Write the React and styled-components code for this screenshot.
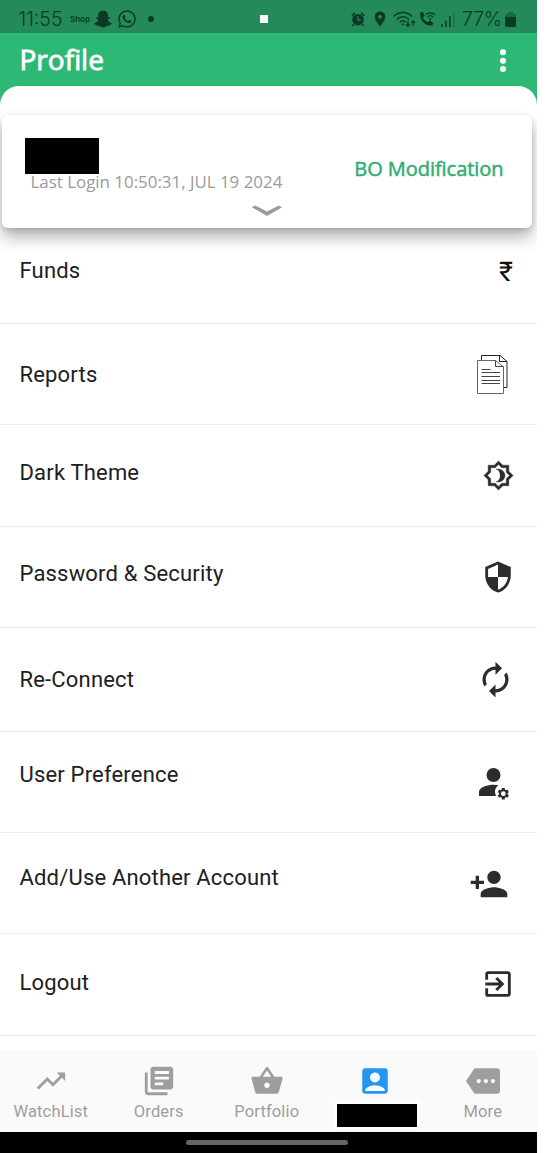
import React from "react";
import styled, { createGlobalStyle } from "styled-components";
import { FaSnapchatGhost, FaWhatsapp } from "react-icons/fa";
import {
  MdAccountBox,
  MdAutorenew,
  MdExitToApp,
  MdLibraryBooks,
  MdLocationOn,
  MdMore,
  MdPersonAdd,
  MdSecurity,
  MdShoppingBasket,
  MdTrendingUp,
} from "react-icons/md";

const GlobalStyle = createGlobalStyle`
  * {
    box-sizing: border-box;
  }
  body {
    margin: 0;
    background: #fff;
    overflow: hidden;
  }
  svg {
    display: block;
    flex: none;
  }
`;

const Screen = styled.div`
  width: 537px;
  height: 1153px;
  display: flex;
  flex-direction: column;
  overflow: hidden;
  background: #fff;
  font-family: Roboto, sans-serif;
`;

const StatusBar = styled.div`
  height: 33px;
  flex: none;
  display: flex;
  align-items: center;
  padding: 5px 0 0 18px;
  background: #248a59;
  color: #0b3a24;
`;

const StatusItem = styled.div`
  width: ${(p) => p.$width}px;
  margin-left: ${(p) => p.$gap || 0}px;
  flex: none;
  display: flex;
  justify-content: center;
`;

const StatusText = styled(StatusItem)`
  font-family: Inter, sans-serif;
  font-size: ${(p) => p.$size}px;
  font-weight: ${(p) => p.$weight || 300};
  letter-spacing: ${(p) => p.$spacing || 0}px;
  line-height: 24px;
  white-space: nowrap;
`;

const Dot = styled.div`
  width: 6px;
  height: 6px;
  border-radius: 50%;
  background: #0b3a24;
`;

const CameraMark = styled.div`
  width: 8px;
  height: 8px;
  background: #fff;
`;

const Header = styled.div`
  background: #2db875;
  flex: none;
`;

const TitleBar = styled.div`
  height: 53px;
  display: flex;
  justify-content: space-between;
  align-items: center;
  padding: 0 30px 0 19.5px;
`;

const Title = styled.h1`
  margin: 0 0 2px;
  color: #fff;
  font-family: "Open Sans", sans-serif;
  font-size: 28px;
  font-weight: 400;
  line-height: 38px;
  -webkit-text-stroke: 0.8px #fff;
`;

const SheetTop = styled.div`
  height: 29px;
  background: #fff;
  border-radius: 19px 19px 0 0;
`;

const Card = styled.div`
  height: 113px;
  flex: none;
  margin: 0 5px 0 2px;
  padding: 23px 28.5px 0 23px;
  display: grid;
  grid-template-columns: 1fr auto;
  grid-template-rows: 54px 36px;
  background: #fff;
  border-radius: 6px;
  box-shadow: 0 10px 16px rgba(0, 0, 0, 0.28), 0 2px 6px rgba(0, 0, 0, 0.14);
  font-family: "Open Sans", sans-serif;
  z-index: 1;
`;

const UserName = styled.div`
  width: 74px;
  height: 36px;
  background: #000;
`;

const LastLogin = styled.div`
  margin: -4px 0 0 5.5px;
  color: #9b9b9b;
  font-size: 16.9px;
  line-height: 24px;
  white-space: nowrap;
`;

const Modification = styled.a`
  margin-top: 17px;
  color: #2fae72;
  font-size: 20px;
  line-height: 28px;
  letter-spacing: -0.05px;
  -webkit-text-stroke: 0.5px #2fae72;
`;

const Expand = styled.div`
  grid-column: 1 / 3;
  margin: 12px 0 0 226px;
`;

const Menu = styled.div`
  height: 822px;
  flex: none;
`;

const MenuRow = styled.div`
  height: ${(p) => p.$height}px;
  display: flex;
  justify-content: space-between;
  border-bottom: 1px solid #ececec;
  color: #202022;
`;

const MenuLabel = styled.span`
  margin: ${(p) => p.$top}px 0 0 19.5px;
  font-size: 22px;
  line-height: 26px;
  letter-spacing: 0.18px;
`;

const MenuIcon = styled.span`
  margin: ${(p) => p.$top}px ${(p) => p.$right}px 0 0;
  color: #2c2c2e;
`;

const Rupee = styled.span`
  display: block;
  color: #111;
  font-size: 27px;
  line-height: 30px;
`;

const BottomNav = styled.div`
  height: 82px;
  flex: none;
  display: grid;
  grid-template-columns: repeat(5, 108px);
  padding-top: 14px;
  background: #fafafa;
  overflow: hidden;
`;

const NavItem = styled.div`
  display: flex;
  flex-direction: column;
  align-items: center;
  margin-left: -6.5px;
  color: ${(p) => (p.$active ? "#2196f3" : "#9e9e9e")};
`;

const NavLabel = styled.span`
  margin-top: 4px;
  font-size: 16.5px;
  line-height: 20px;
  letter-spacing: 0.15px;
`;

const HiddenLabel = styled.div`
  width: 80px;
  height: 23px;
  margin: 6px 0 0 3.5px;
  flex: none;
  background: #000;
  box-shadow: 0 0 0 3px #fff;
`;

const GestureBar = styled.div`
  height: 21px;
  flex: none;
  padding: 8px 0 0 186px;
  background: #000;
`;

const Handle = styled.div`
  width: 162px;
  height: 5px;
  border-radius: 3px;
  background: #666;
`;

const AlarmIcon = () => (
  <svg width="14" height="15" viewBox="0 0 14 15" fill="none">
    <circle cx="7" cy="7.7" r="5.8" fill="currentColor" />
    <path d="M.8 3.6 4 .9M13.2 3.6 10 .9M2.7 12.3 1.3 14M11.3 12.3l1.4 1.7" stroke="currentColor" strokeWidth="1.6" />
    <path d="M7 4.5v3.7h3" stroke="#248a59" strokeWidth="1.2" />
  </svg>
);

const WifiIcon = () => (
  <svg width="23" height="17" viewBox="0 0 23 17" fill="none" stroke="currentColor" strokeWidth="1.5">
    <path d="M.8 5.5c5-5.2 13-5.2 18 0M3.7 8.4c3.4-3.5 8.8-3.5 12.2 0M6.7 11.2c1.8-1.8 4.4-1.8 6.2 0" />
    <circle cx="9.8" cy="13.4" r="1.1" fill="currentColor" stroke="none" />
    <path d="M15 9.8v5.4m-2-1.9 2 2 2-2M20.3 15.3V9.9m-2 2 2-2 2 2" strokeWidth="1.3" />
  </svg>
);

const CallIcon = () => (
  <svg width="17" height="16" viewBox="0 0 17 16" fill="none">
    <path d="M1.2 1.4 3.7.8 5.6 4.6 4 6.4c1 2.2 2.6 3.8 4.8 4.8l1.8-1.6 3.6 1.9-.6 2.7C8.2 16 .2 10.2 1.2 1.4z" fill="currentColor" />
    <path d="M6.7 3.8c2.7-2.6 6.7-2.6 9.4 0M8.6 6c1.6-1.6 4-1.6 5.6 0" stroke="currentColor" strokeWidth="1.3" />
    <circle cx="11.4" cy="7.9" r="1" fill="currentColor" />
  </svg>
);

const SignalIcon = () => (
  <svg width="14" height="15" viewBox="0 0 14 15" fill="currentColor">
    <path d="M0 12h1.6v3H0zM4 8.5h1.6V15H4zM8 4h1.6v11H8z" />
    <path d="M12 1h1.6v14H12z" opacity=".3" />
  </svg>
);

const BatteryIcon = () => (
  <svg width="11" height="15" viewBox="0 0 11 15" fill="currentColor">
    <path d="M3 0h5v2h3v4H0V2h3z" opacity=".4" />
    <path d="M0 5h11v8.5a1.5 1.5 0 0 1-1.5 1.5h-8A1.5 1.5 0 0 1 0 13.5z" />
  </svg>
);

const MoreDots = () => (
  <svg width="8" height="24" viewBox="0 0 8 24" fill="#fff">
    <circle cx="4" cy="4.2" r="3" />
    <circle cx="4" cy="12.8" r="3" />
    <circle cx="4" cy="21" r="3" />
  </svg>
);

const ChevronIcon = () => (
  <svg width="32" height="13" viewBox="0 0 32 13" fill="#9b9b9b">
    <path d="M.8 3.200 4.200 1.500 16 7.400 27.800 1.500 31.200 3.200 16 12z" />
  </svg>
);

const ReportsIcon = () => (
  <svg width="32" height="40" viewBox="0 0 32 40" fill="none">
    <path d="M4.5 5.5v-5H23l7 6v26H27M22.5.5v6h7.500" stroke="#222" />
    <path d="M.5 5.5h18l8 6.500v26.500H.5z" fill="#fff" stroke="#666" />
    <path d="M18.500 5.500v6h8" stroke="#444" />
    <path d="M4.500 14.500h9M4.500 17.500H23M4.500 21.500H23M4.500 25.500H23M4.500 28.500H23" stroke="#444" />
  </svg>
);

const ThemeIcon = () => (
  <svg width="31" height="31" viewBox="0 0 24 24" fill="currentColor" stroke="currentColor" strokeWidth=".3">
    <path d="M20 8.690V4h-4.690L12 .69 8.690 4H4v4.690L.69 12 4 15.310V20h4.690L12 23.310 15.310 20H20v-4.690L23.310 12 20 8.690zm-2 5.790V18h-3.520L12 20.480 9.520 18H6v-3.520L3.520 12 6 9.520V6h3.520L12 3.520 14.480 6H18v3.520L20.480 12 18 14.480z" />
    <path d="M10.200 7c2.300.8 3.100 2.800 3.100 5s-.8 4.200-3.100 5c4 .6 6.800-1.900 6.800-5s-2.800-5.600-6.800-5z" />
  </svg>
);

const UserGearIcon = () => (
  <svg width="32" height="34" viewBox="0 0 32 34" fill="currentColor">
    <circle cx="15.500" cy="8" r="7" />
    <path d="M1 29v-4c0-5.200 9-7.300 14.500-7.300 1.600 0 3.300.2 5 .5-3.400 2.200-4.600 6.600-2.200 10.800z" />
    <circle cx="25.300" cy="26.700" r="3.400" fill="none" stroke="currentColor" strokeWidth="2" />
    <path
      d="M25.300 23.300v-2.300M25.300 30.100v2.300M22.400 25l-2-1.150M28.200 28.400l2 1.150M22.400 28.400l-2 1.150M28.200 25l2-1.150"
      stroke="currentColor"
      strokeWidth="3"
    />
  </svg>
);

const menuItems = [
  { label: "Funds", height: 96, top: 30, icon: <Rupee>₹</Rupee>, iconTop: 29, right: 24 },
  { label: "Reports", height: 101, top: 38, icon: <ReportsIcon />, iconTop: 31, right: 28 },
  { label: "Dark Theme", height: 102, top: 35, icon: <ThemeIcon />, iconTop: 35, right: 23.5 },
  { label: "Password & Security", height: 101, top: 34, icon: <MdSecurity size={34} />, iconTop: 32.5, right: 22.5 },
  { label: "Re-Connect", height: 104, top: 39, icon: <MdAutorenew size={39} />, iconTop: 32, right: 22 },
  { label: "User Preference", height: 101, top: 30, icon: <UserGearIcon />, iconTop: 35, right: 27 },
  { label: "Add/Use Another Account", height: 101, top: 32, icon: <MdPersonAdd size={40} />, iconTop: 30.5, right: 28.5 },
  { label: "Logout", height: 102, top: 36, icon: <MdExitToApp size={34} />, iconTop: 33, right: 22 },
];

const navItems = [
  { label: "WatchList", Icon: MdTrendingUp },
  { label: "Orders", Icon: MdLibraryBooks },
  { label: "Portfolio", Icon: MdShoppingBasket },
  { label: "", Icon: MdAccountBox, active: true },
  { label: "More", Icon: MdMore },
];

const App = () => {
  return (
    <Screen>
      <GlobalStyle />
      <StatusBar>
        <StatusText $width={45} $size={19.5}>11:55</StatusText>
        <StatusText $width={20} $gap={7} $size={8} $weight={600}>Shop</StatusText>
        <StatusItem $width={18} $gap={4}>
          <FaSnapchatGhost size={18} />
        </StatusItem>
        <StatusItem $width={20} $gap={5}>
          <FaWhatsapp size={20} />
        </StatusItem>
        <StatusItem $width={6} $gap={11}>
          <Dot />
        </StatusItem>
        <StatusItem $width={8} $gap={106}>
          <CameraMark />
        </StatusItem>
        <StatusItem $width={14} $gap={83}>
          <AlarmIcon />
        </StatusItem>
        <StatusItem $width={12} $gap={9}>
          <MdLocationOn size={18} />
        </StatusItem>
        <StatusItem $width={23} $gap={7}>
          <WifiIcon />
        </StatusItem>
        <StatusItem $width={17} $gap={3}>
          <CallIcon />
        </StatusItem>
        <StatusItem $width={14} $gap={5}>
          <SignalIcon />
        </StatusItem>
        <StatusText $width={40} $gap={7} $size={19.5} $spacing={-0.2}>77%</StatusText>
        <StatusItem $width={11} $gap={3}>
          <BatteryIcon />
        </StatusItem>
      </StatusBar>
      <Header>
        <TitleBar>
          <Title>Profile</Title>
          <MoreDots />
        </TitleBar>
        <SheetTop />
      </Header>
      <Card>
        <div>
          <UserName />
          <LastLogin>Last Login 10:50:31, JUL 19 2024</LastLogin>
        </div>
        <Modification>BO Modification</Modification>
        <Expand>
          <ChevronIcon />
        </Expand>
      </Card>
      <Menu>
        {menuItems.map((item) => (
          <MenuRow key={item.label} $height={item.height}>
            <MenuLabel $top={item.top}>{item.label}</MenuLabel>
            <MenuIcon $top={item.iconTop} $right={item.right}>
              {item.icon}
            </MenuIcon>
          </MenuRow>
        ))}
      </Menu>
      <BottomNav>
        {navItems.map(({ label, Icon, active }) => (
          <NavItem key={label} $active={active}>
            <Icon size={34} />
            {active ? <HiddenLabel /> : <NavLabel>{label}</NavLabel>}
          </NavItem>
        ))}
      </BottomNav>
      <GestureBar>
        <Handle />
      </GestureBar>
    </Screen>
  );
};

export default App;
